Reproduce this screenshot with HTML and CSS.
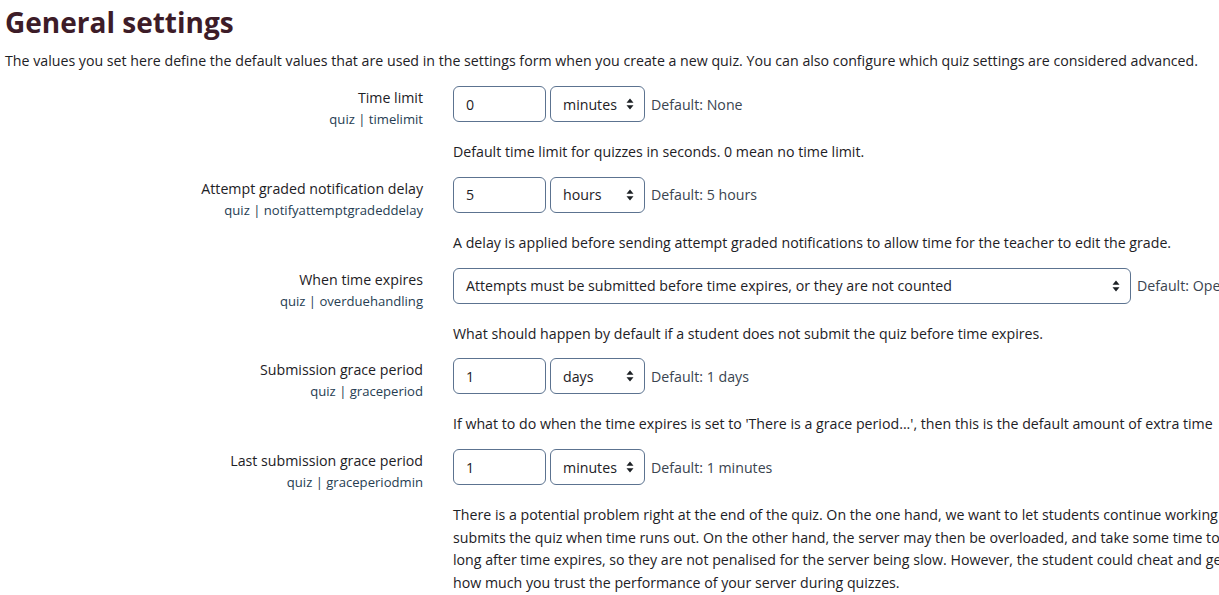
FILE: index.html
```html
<!DOCTYPE html>
<html lang="en">
<head>
<meta charset="utf-8">
<title>General settings</title>
<link rel="stylesheet" href="styles.css">
</head>
<body>
<div class="page">
  <h2 class="title">General settings</h2>
  <p class="intro">The values you set here define the default values that are used in the settings form when you create a new quiz. You can also configure which quiz settings are considered advanced.</p>

  <div class="setting">
    <div class="label">
      <div class="name">Time limit</div>
      <div class="shortname">quiz | timelimit</div>
    </div>
    <div class="field">
      <div class="controls">
        <div class="input">0</div>
        <div class="select"><span>minutes</span><svg class="arrows" viewBox="0 0 8 12" width="8" height="12"><path d="M4 0.5 L7.5 4.8 H0.5 Z M4 11.5 L0.5 7.2 H7.5 Z"/></svg></div>
        <div class="default">Default: None</div>
      </div>
      <div class="desc">Default time limit for quizzes in seconds. 0 mean no time limit.</div>
    </div>
  </div>

  <div class="setting">
    <div class="label">
      <div class="name">Attempt graded notification delay</div>
      <div class="shortname">quiz | notifyattemptgradeddelay</div>
    </div>
    <div class="field">
      <div class="controls">
        <div class="input">5</div>
        <div class="select"><span>hours</span><svg class="arrows" viewBox="0 0 8 12" width="8" height="12"><path d="M4 0.5 L7.5 4.8 H0.5 Z M4 11.5 L0.5 7.2 H7.5 Z"/></svg></div>
        <div class="default">Default: 5 hours</div>
      </div>
      <div class="desc">A delay is applied before sending attempt graded notifications to allow time for the teacher to edit the grade.</div>
    </div>
  </div>

  <div class="setting">
    <div class="label">
      <div class="name">When time expires</div>
      <div class="shortname">quiz | overduehandling</div>
    </div>
    <div class="field">
      <div class="controls">
        <div class="select wide"><span>Attempts must be submitted before time expires, or they are not counted</span><svg class="arrows" viewBox="0 0 8 12" width="8" height="12"><path d="M4 0.5 L7.5 4.8 H0.5 Z M4 11.5 L0.5 7.2 H7.5 Z"/></svg></div>
        <div class="default">Default: Ope</div>
      </div>
      <div class="desc">What should happen by default if a student does not submit the quiz before time expires.</div>
    </div>
  </div>

  <div class="setting">
    <div class="label">
      <div class="name">Submission grace period</div>
      <div class="shortname">quiz | graceperiod</div>
    </div>
    <div class="field">
      <div class="controls">
        <div class="input">1</div>
        <div class="select"><span>days</span><svg class="arrows" viewBox="0 0 8 12" width="8" height="12"><path d="M4 0.5 L7.5 4.8 H0.5 Z M4 11.5 L0.5 7.2 H7.5 Z"/></svg></div>
        <div class="default">Default: 1 days</div>
      </div>
      <div class="desc">If what to do when the time expires is set to 'There is a grace period...', then this is the default amount of extra time</div>
    </div>
  </div>

  <div class="setting">
    <div class="label">
      <div class="name">Last submission grace period</div>
      <div class="shortname">quiz | graceperiodmin</div>
    </div>
    <div class="field">
      <div class="controls">
        <div class="input">1</div>
        <div class="select"><span>minutes</span><svg class="arrows" viewBox="0 0 8 12" width="8" height="12"><path d="M4 0.5 L7.5 4.8 H0.5 Z M4 11.5 L0.5 7.2 H7.5 Z"/></svg></div>
        <div class="default">Default: 1 minutes</div>
      </div>
      <div class="desc">There is a potential problem right at the end of the quiz. On the one hand, we want to let students continue working<br>submits the quiz when time runs out. On the other hand, the server may then be overloaded, and take some time to<br>long after time expires, so they are not penalised for the server being slow. However, the student could cheat and ge<br>how much you trust the performance of your server during quizzes.</div>
    </div>
  </div>
</div>
</body>
</html>
```

FILE: styles.css
```css
html, body {
  margin: 0;
  padding: 0;
  background: #ffffff;
  overflow: hidden;
}

.page {
  padding: 0 0 0 5px;
  font-family: "Open Sans", "Noto Sans", sans-serif;
  font-size: 14.2px;
  color: #1d2125;
}

.title {
  margin: 4px 0 0 0;
  font-size: 28px;
  line-height: 36px;
  font-weight: 700;
  color: #3d1c28;
}

.intro {
  margin: 10px 0 14px 0;
  line-height: 22px;
  white-space: nowrap;
}

.setting {
  display: grid;
  grid-template-columns: 418px 1fr;
  column-gap: 30px;
  margin-bottom: 13.25px;
}

.label {
  text-align: right;
  padding-top: 1px;
}

.name {
  line-height: 22px;
}

.shortname {
  font-size: 13.1px;
  line-height: 20px;
  color: #263d52;
}

.field {
  min-width: 0;
}

.controls {
  display: flex;
  align-items: center;
  gap: 4px;
  height: 36px;
  white-space: nowrap;
}

.input, .select {
  box-sizing: border-box;
  height: 36px;
  border: 1px solid #5c7390;
  border-radius: 6px;
  display: flex;
  align-items: center;
  padding: 0 12px;
  flex: none;
}

.input {
  width: 93px;
}

.select {
  width: 95px;
  justify-content: space-between;
  padding-right: 10px;
}

.select.wide {
  width: 678px;
}

.arrows {
  fill: #1d2125;
  flex: none;
}

.default {
  margin-left: 2px;
  color: #3a4450;
}

.desc {
  margin-top: 19px;
  line-height: 22.5px;
  white-space: nowrap;
}
```
